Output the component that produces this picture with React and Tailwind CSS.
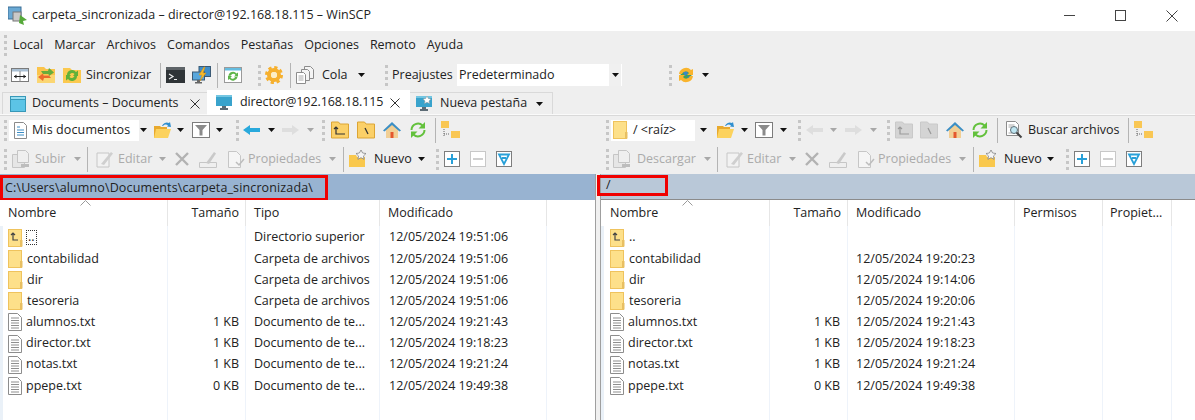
import React from 'react';

const font = { fontFamily: '"Open Sans", "Noto Sans", sans-serif' };

const Caret = ({ dim, className = '' }) => (
  <svg width="7" height="4" viewBox="0 0 7 4" className={`shrink-0 ${className}`}>
    <path d="M0 0h7L3.500 4z" fill={dim ? '#a8a8a8' : '#111'} />
  </svg>
);

const Grip = ({ className = '' }) => (
  <div className={`shrink-0 w-[3px] h-[21px] border-l-[3px] border-dotted border-[#c6c6c6] ${className}`} />
);

const Sep = ({ className = '' }) => <div className={`shrink-0 w-px h-[25px] bg-[#b4b4b4] ${className}`} />;

const Svg = ({ w = 18, h = 18, children, className = '' }) => (
  <svg width={w} height={h} viewBox="0 0 18 18" className={`shrink-0 ${className}`}>{children}</svg>
);

const FolderIcon = ({ up, w = 15, h = 18 }) => (
  <svg width={w} height={h} viewBox="0 0 15 18" className="shrink-0">
    <rect x="0.500" y="0.500" width="13" height="17" fill="#fde08a" stroke="#efc35d" />
    <rect x="12" y="11" width="2.500" height="6.500" fill="#e8bf62" />
    {up && <path d="M3 6l2-2 2 2M5 4v7h5" fill="none" stroke="#444" strokeWidth="1.200" />}
  </svg>
);

const TxtIcon = () => (
  <svg width="14" height="18" viewBox="0 0 14 18" className="shrink-0">
    <path d="M.5.5h9l4 4v13H.5z" fill="#fff" stroke="#8d8d8d" />
    <path d="M3 5h8M3 7.500h8M3 10h8M3 12.500h8M3 15h8" stroke="#8f8f8f" />
  </svg>
);

const Sync = () => (
  <Svg>
    <path d="M0 2h7l2 2h9v13H0z" fill="#fbc94f" />
    <path d="M4 9a5 5 0 0 1 9-3l2-1.500V10h-5l1.500-2a3 3 0 0 0-5 1z" fill="#5fb13a" />
    <path d="M14 10a5 5 0 0 1-9 3l-2 1.500V9h5l-1.500 2a3 3 0 0 0 5-1z" fill="#5fb13a" />
  </Svg>
);

const OrangeSync = () => (
  <Svg>
    <path d="M0 1h7l2 2h9v6H0z" fill="#fbc44b" />
    <path d="M0 9h18v8H0z" fill="#fbd672" />
    <path d="M4 5h7l1-3 5 4.500L12 10l-.500-2H6z" fill="#66ad3c" />
    <path d="M14 12H7l-1 3-5-4 5-3.500.5 2H12z" fill="#ea6b2d" />
  </Svg>
);

const Compare = () => (
  <Svg>
    <rect x=".5" y="2.500" width="17" height="13" fill="#fff" stroke="#7b7b7b" />
    <path d="M1 3h16v2.500H1z" fill="#a9bfd3" />
    <path d="M9 5v10.500" stroke="#888" />
    <path d="M3 10.500h12" stroke="#222" />
    <path d="M5.500 8.500l-2.500 2 2.500 2zM12.500 8.500l2.500 2-2.500 2z" fill="#222" />
  </Svg>
);

const Terminal = () => (
  <svg width="19" height="18" viewBox="0 0 19 18" className="shrink-0">
    <rect x="0" y="1" width="19" height="16" fill="#2f3437" />
    <rect x="0" y="1" width="19" height="3" fill="#5d6367" />
    <path d="M3 8l4 2.500L3 13" fill="none" stroke="#eee" strokeWidth="1.200" />
    <path d="M8 13.500h3" stroke="#eee" />
  </svg>
);

const Putty = () => (
  <svg width="19" height="18" viewBox="0 0 19 18" className="shrink-0">
    <rect x="7" y=".5" width="11.500" height="10" fill="#3f8ec9" stroke="#3a5a75" />
    <rect x=".5" y="6" width="12" height="8" fill="#58a7dc" stroke="#3a5a75" />
    <path d="M5 14h3v2h2v1.500H3V16h2z" fill="#666" />
    <path d="M12 1L7 9h3l-2 6 6-8h-3l2-6z" fill="#f7b92a" stroke="#d9920f" strokeWidth=".5" />
  </svg>
);

const RefreshBox = () => (
  <Svg>
    <rect x=".5" y="1.500" width="17" height="15" fill="#fff" stroke="#9a9a9a" />
    <path d="M1 2h16v2.500H1z" fill="#65bde0" />
    <path d="M4.500 10a4.500 4.500 0 0 1 8-2.500L14 6.500v4h-4l1.500-1.500a2.500 2.500 0 0 0-4.500.5z" fill="#5db54a" />
    <path d="M13.500 11a4.500 4.500 0 0 1-8 2L4 14v-4h4l-1.500 1.500a2.500 2.500 0 0 0 4.500-.5z" fill="#5db54a" />
  </Svg>
);

const Gear = () => (
  <Svg>
    <circle cx="9" cy="9" r="5" fill="none" stroke="#f6b02e" strokeWidth="4" />
    <circle cx="9" cy="9" r="7.500" fill="none" stroke="#f6b02e" strokeWidth="3" strokeDasharray="3.200 2.690" />
    <circle cx="9" cy="9" r="3" fill="#fdeec4" />
  </Svg>
);

const Copies = () => (
  <Svg>
    <path d="M8.500.5h6l3 3v9h-9z" fill="#f4f4f4" stroke="#8c8c8c" />
    <path d="M5.500 3.500h6l2 2v9h-8z" fill="#f4f4f4" stroke="#8c8c8c" />
    <path d="M.5 6.500h7l2 2v9h-9z" fill="#fff" stroke="#8c8c8c" />
    <path d="M2.500 10h5M2.500 12h5M2.500 14h5" stroke="#aaa" />
  </Svg>
);

const Globe = () => (
  <Svg>
    <circle cx="9" cy="9" r="5.500" fill="#3fa15b" />
    <path d="M6 6l4-1 1 3-3 2zM10 11l3-1-1 3z" fill="#3a86c8" />
    <path d="M2 8a7 7 0 0 1 12-4l2-1v6h-6l2-2a4 4 0 0 0-7 1z" fill="#f9b42d" />
    <path d="M16 10a7 7 0 0 1-12 4l-2 1V9h6l-2 2a4 4 0 0 0 7-1z" fill="#f9b42d" />
  </Svg>
);

const Monitor = ({ star }) => (
  <svg width="16" height="16" viewBox="0 0 16 16" className="shrink-0">
    <rect x="0" y="0" width="16" height="11" fill="#39a3cc" />
    <path d="M0 0h16v2H0z" fill="#74c6e2" />
    <path d="M6 11h4v2h2v2H4v-2h2z" fill="#5c6b75" />
    {star && <path d="M11 0l1.300 2.500L15 3l-2 2 .5 2.500-2.500-1.200-2.500 1.200L9 5 7 3l2.700-.5z" fill="#fff" stroke="#999" strokeWidth=".5" />}
  </svg>
);

const WinFolder = () => (
  <svg width="16" height="16" viewBox="0 0 16 16" className="shrink-0">
    <rect x=".5" y=".5" width="15" height="15" fill="#5cc4e6" stroke="#3798b8" />
    <rect x=".5" y=".5" width="15" height="3" fill="#9bdff2" stroke="#3798b8" />
  </svg>
);

const OpenFolder = () => (
  <svg width="19" height="18" viewBox="0 0 19 18" className="shrink-0">
    <path d="M1 5h6l1 1h6v11H1z" fill="#e8a92d" />
    <path d="M3 8h15l-3 9H1z" fill="#fcd25d" />
    <path d="M9 5a5 5 0 0 1 7-3l1-1 1 5-4-.5 1-1a3 3 0 0 0-5 .5z" fill="#2f8fd0" />
  </svg>
);

const Filter = () => (
  <Svg>
    <rect x=".5" y="1.500" width="17" height="15" fill="#fff" stroke="#7c7c7c" />
    <path d="M3 4h12l-4.500 5v5.500h-3V9z" fill="#8a8a8a" />
  </Svg>
);

const Arrow = ({ dir = 'left', dim }) => (
  <svg width="17" height="10" viewBox="0 0 17 10" className="shrink-0">
    <path d={dir === 'left' ? 'M0 5l7-5v3h10v4H7v3z' : 'M17 5l-7-5v3H0v4h10v3z'} fill={dim ? '#dedede' : '#29a9dc'} />
  </svg>
);

const ParentDir = ({ dim }) => (
  <Svg>
    <path d="M.5 1h7l1.500 2h8.500v14H.5z" fill={dim ? '#d4d4d4' : '#fbd068'} stroke={dim ? '#c9c9c9' : '#dca534'} />
    <path d="M3 8l2-2 2 2M5 6v7h9" fill="none" stroke={dim ? '#9a9a9a' : '#333'} strokeWidth="1.200" />
  </Svg>
);

const RootDir = ({ dim }) => (
  <Svg>
    <path d="M.5 1h7l1.500 2h8.500v14H.5z" fill={dim ? '#d4d4d4' : '#fbd068'} stroke={dim ? '#c9c9c9' : '#dca534'} />
    <path d="M8 7l3 6" stroke={dim ? '#9a9a9a' : '#333'} strokeWidth="1.300" />
  </Svg>
);

const Home = () => (
  <Svg>
    <path d="M3 8l6-5 6 5v9H3z" fill="#f1cf95" />
    <path d="M7.500 11h3v6h-3z" fill="#e4572e" />
    <path d="M0 9.500L9 1l9 8.500-1.500 1L9 4 1.500 10.500z" fill="#3c8fc5" />
  </Svg>
);

const GreenRefresh = () => (
  <Svg>
    <path d="M2.500 9a6.500 6.500 0 0 1 11-4.500" fill="none" stroke="#63c13c" strokeWidth="2" />
    <path d="M15.500 9a6.500 6.500 0 0 1-11 4.500" fill="none" stroke="#63c13c" strokeWidth="2" />
    <path d="M16 1v6.500H9.500z" fill="#63c13c" />
    <path d="M2 17v-6.500h6.500z" fill="#63c13c" />
  </Svg>
);

const Tree = () => (
  <svg width="20" height="18" viewBox="0 0 20 18" className="shrink-0">
    <path d="M0 0h8v7H0zM10 10h9v7h-9z" fill="#f9c754" />
    <path d="M3 8v7M3 13h6" stroke="#666" strokeDasharray="1 1" />
  </svg>
);

const Transfer = () => (
  <Svg>
    <path d="M.5 4.500h9l3 3v10H.5z" fill="#e6e6e6" stroke="#c5c5c5" />
    <path d="M5.500.5h8l3 3v9h-11z" fill="#efefef" stroke="#c5c5c5" />
    <path d="M9 14h8v3H9z" fill="#bdbdbd" />
  </Svg>
);

const EditIcon = () => (
  <Svg>
    <path d="M1 3h12v14H1z" fill="#f2f2f2" stroke="#c6c6c6" />
    <path d="M5 14L15 2l2 1.500L8 15z" fill="#cfcfcf" />
  </Svg>
);

const Cross = () => (
  <svg width="14" height="14" viewBox="0 0 14 14" className="shrink-0">
    <path d="M1 1l12 12M13 1L1 13" stroke="#b2b2b2" strokeWidth="2.400" />
  </svg>
);

const Rename = () => (
  <Svg>
    <path d="M.5 12.500h17v5H.5z" fill="none" stroke="#c6c6c6" />
    <path d="M7 13L15 2l2 1.500L10 14z" fill="#c9c9c9" />
  </Svg>
);

const Props = () => (
  <Svg>
    <path d="M1.500 1.500h8l4 4v12h-12z" fill="#f5f5f5" stroke="#c6c6c6" />
    <path d="M9 12l3 3 5-6" fill="none" stroke="#bdbdbd" strokeWidth="1.500" />
  </Svg>
);

const NewFolder = () => (
  <Svg>
    <path d="M0 5h7l1 2h8v10H0z" fill="#f9c84d" />
    <path d="M12 0l1.600 3 3.400.5-2.500 2.400.6 3.400-3.100-1.600-3.100 1.600.6-3.400L7 3.500 10.400 3z" fill="#f5f5f5" stroke="#777" strokeWidth=".7" />
  </Svg>
);

const BoxBtn = ({ kind }) => {
  const dim = kind === 'minus';
  return (
    <svg width="16" height="16" viewBox="0 0 16 16" className="shrink-0">
      <rect x=".5" y=".5" width="15" height="15" fill="#fff" stroke={dim ? '#c8c8c8' : '#7d7d7d'} />
      {kind === 'plus' && <path d="M3 8h10M8 3v10" stroke="#28a0d8" strokeWidth="2" />}
      {kind === 'minus' && <path d="M3 8h10" stroke="#cfcfcf" strokeWidth="2" />}
      {kind === 'check' && <path d="M3 3.500h10L8 13zM6 7h4" fill="none" stroke="#28a0d8" strokeWidth="1.800" />}
    </svg>
  );
};

const Search = () => (
  <svg width="17" height="18" viewBox="0 0 17 18" className="shrink-0">
    <path d="M.5.5h9l3 3v11H.5z" fill="#fff" stroke="#8c8c8c" />
    <path d="M2.500 4h6M2.500 6h4M2.500 12h4" stroke="#aaa" />
    <circle cx="8" cy="9" r="3.500" fill="#bfe6f2" stroke="#5d6d75" />
    <path d="M10.500 11.500l5 5" stroke="#444" strokeWidth="2" />
  </svg>
);

const Label = ({ w, dim, children, className = '' }) => (
  <span className={`shrink-0 whitespace-nowrap ${dim ? 'text-[#ababab]' : 'text-[#222]'} ${className}`} style={{ width: w }}>
    {children}
  </span>
);

const Th = ({ w, right, pl = '', children }) => (
  <div className={`shrink-0 h-full flex items-center border-r border-[#e6e6e6] ${right ? 'justify-end pr-[6px]' : ''} ${pl}`} style={{ width: w }}>
    {children}
  </div>
);

const Cell = ({ children, className = '' }) => (
  <div className={`h-[21.2px] flex items-center whitespace-nowrap ${className}`}>{children}</div>
);

const files = [
  ['up', '..'],
  ['dir', 'contabilidad'],
  ['dir', 'dir'],
  ['dir', 'tesoreria'],
  ['txt', 'alumnos.txt'],
  ['txt', 'director.txt'],
  ['txt', 'notas.txt'],
  ['txt', 'ppepe.txt'],
];

const sizes = ['', '', '', '', '1 KB', '1 KB', '1 KB', '0 KB'];

const leftTypes = [
  'Directorio superior',
  'Carpeta de archivos',
  'Carpeta de archivos',
  'Carpeta de archivos',
  'Documento de te...',
  'Documento de te...',
  'Documento de te...',
  'Documento de te...',
];

const leftDates = [
  '12/05/2024 19:51:06',
  '12/05/2024 19:51:06',
  '12/05/2024 19:51:06',
  '12/05/2024 19:51:06',
  '12/05/2024 19:21:43',
  '12/05/2024 19:18:23',
  '12/05/2024 19:21:24',
  '12/05/2024 19:49:38',
];

const rightDates = [
  '',
  '12/05/2024 19:20:23',
  '12/05/2024 19:14:06',
  '12/05/2024 19:20:06',
  '12/05/2024 19:21:43',
  '12/05/2024 19:18:23',
  '12/05/2024 19:21:24',
  '12/05/2024 19:49:38',
];

const FileIcon = ({ kind }) => {
  if (kind === 'txt') return <TxtIcon />;
  return <FolderIcon up={kind === 'up'} />;
};

const SortMark = ({ className = '' }) => (
  <svg width="11" height="6" viewBox="0 0 11 6" className={`absolute top-0 ${className}`}>
    <path d="M.5 5.500l5-5 5 5" fill="none" stroke="#9a9a9a" />
  </svg>
);

const cols = 'shrink-0 h-full border-r border-[#eef3fa]';

export default function App() {
  return (
    <div className="w-[1195px] h-[420px] overflow-hidden bg-white text-[12.5px] text-[#222] leading-none" style={font}>
      {/* title bar */}
      <div className="h-[31px] flex items-center pl-[8px] pr-[17px] bg-white">
        <svg width="19" height="20" viewBox="0 0 19 20" className="shrink-0">
          <rect x="0" y="1" width="13" height="12" fill="#6aa9d4" stroke="#3a6f96" />
          <rect x="5" y="6" width="8" height="9" fill="#c9c9c9" stroke="#777" />
          <path d="M12 9l7 5-4 1 1 4-5-2z" fill="#56a93a" />
        </svg>
        <span className="ml-[5px] whitespace-nowrap">carpeta_sincronizada – director@192.168.18.115 – WinSCP</span>
        <div className="ml-auto flex items-center gap-[40px]">
          <div className="w-[11px] h-px bg-[#444]" />
          <div className="w-[11px] h-[11px] border border-[#444]" />
          <svg width="12" height="12" viewBox="0 0 12 12"><path d="M.5.5l11 11M11.500.5l-11 11" stroke="#444" /></svg>
        </div>
      </div>

      <div className="bg-[#efefef]">
        {/* menu */}
        <div className="h-[29px] flex items-center pl-[4px]">
          <Grip />
          <div className="ml-[6px] flex gap-[11px]">
            {['Local', 'Marcar', 'Archivos', 'Comandos', 'Pestañas', 'Opciones', 'Remoto', 'Ayuda'].map(m => (
              <span key={m}>{m}</span>
            ))}
          </div>
        </div>

        {/* main toolbar */}
        <div className="h-[30px] flex items-center pl-[4px]">
          <Grip />
          <div className="ml-[4px]"><Compare /></div>
          <div className="ml-[8px]"><OrangeSync /></div>
          <div className="ml-[8px]"><Sync /></div>
          <Label w={68} className="ml-[5px]">Sincronizar</Label>
          <Sep className="ml-[6px]" />
          <div className="ml-[5px]"><Terminal /></div>
          <div className="ml-[7px]"><Putty /></div>
          <Sep className="ml-[6px]" />
          <div className="ml-[6px]"><RefreshBox /></div>
          <Grip className="ml-[16px]" />
          <div className="ml-[4px]"><Gear /></div>
          <Sep className="ml-[7px]" />
          <div className="ml-[5px]"><Copies /></div>
          <Label w={28} className="ml-[8px]">Cola</Label>
          <Caret className="ml-[8px]" />
          <Grip className="ml-[20px]" />
          <Label w={62} className="ml-[4px]">Preajustes</Label>
          <div className="ml-[3px] w-[165px] h-[22px] bg-white flex items-center justify-between pl-[2px]">
            <span>Predeterminado</span>
            <div className="w-[13px] h-full bg-[#f0f0f0] flex items-center justify-center border-r border-white"><Caret /></div>
          </div>
          <Grip className="ml-[47px]" />
          <div className="ml-[5px]"><Globe /></div>
          <Caret className="ml-[7px]" />
        </div>

        {/* tabs */}
        <div className="h-[24px] flex items-end pl-[2px]">
          <div className="w-[205px] h-[22px] flex items-center pl-[7px] border border-b-0 border-[#d9d9d9] border-r-0">
            <WinFolder />
            <span className="ml-[6px] whitespace-nowrap">Documents – Documents</span>
            <svg width="10" height="10" viewBox="0 0 10 10" className="ml-auto mr-[7px]"><path d="M.5.5l9 9M9.500.5l-9 9" stroke="#333" /></svg>
          </div>
          <div className="w-[203px] h-[25px] bg-white flex items-center pl-[9px] mb-[-1px]">
            <Monitor />
            <span className="ml-[8px] whitespace-nowrap tracking-[-0.1px]">director@192.168.18.115</span>
            <svg width="10" height="10" viewBox="0 0 10 10" className="ml-auto mr-[10px]"><path d="M.5.5l9 9M9.500.5l-9 9" stroke="#333" /></svg>
          </div>
          <div className="w-[143px] h-[22px] flex items-center pl-[6px] border border-b-0 border-[#d9d9d9] border-l-0">
            <Monitor star />
            <span className="ml-[8px] whitespace-nowrap">Nueva pestaña</span>
            <Caret className="ml-[9px]" />
          </div>
        </div>
        <div className="h-[2px] bg-[#fafafa] border-b border-[#d9d9d9]" />

        {/* panel toolbars, row 1 */}
        <div className="h-[28px] flex items-center">
          <div className="w-[601px] shrink-0 flex items-center pl-[4px]">
            <Grip />
            <div className="ml-[2px] w-[130px] h-[21px] bg-white flex items-center pl-[5px]">
              <svg width="13" height="17" viewBox="0 0 13 17" className="shrink-0">
                <path d="M.5.5h9l3 3v13H.5z" fill="#fff" stroke="#8a8a8a" />
                <path d="M3 5h3M3 8h7M3 10.500h7M3 13h7" stroke="#3b8cc4" />
              </svg>
              <span className="ml-[5px] whitespace-nowrap tracking-[0.12px]">Mis documentos</span>
            </div>
            <div className="w-[9px] flex justify-center"><Caret /></div>
            <div className="ml-[5px]"><OpenFolder /></div>
            <Caret className="ml-[5px]" />
            <div className="ml-[8px]"><Filter /></div>
            <Caret className="ml-[6px]" />
            <Grip className="ml-[13px]" />
            <div className="ml-[4px]"><Arrow /></div>
            <Caret className="ml-[8px]" />
            <div className="ml-[7px]"><Arrow dir="right" dim /></div>
            <Caret dim className="ml-[8px]" />
            <Grip className="ml-[8px]" />
            <div className="ml-[6px]"><ParentDir /></div>
            <div className="ml-[8px]"><RootDir /></div>
            <div className="ml-[8px]"><Home /></div>
            <div className="ml-[8px]"><GreenRefresh /></div>
            <Sep className="ml-[8px]" />
            <div className="ml-[5px]"><Tree /></div>
          </div>
          <div className="flex items-center pl-[5px]">
            <Grip />
            <div className="ml-[2px] w-[84px] h-[21px] bg-white flex items-center pl-[2px]">
              <FolderIcon />
              <span className="ml-[5px] whitespace-nowrap">/ &lt;raíz&gt;</span>
            </div>
            <div className="w-[16px] flex justify-center"><Caret /></div>
            <div className="ml-[5px]"><OpenFolder /></div>
            <Caret className="ml-[6px]" />
            <div className="ml-[7px]"><Filter /></div>
            <Caret className="ml-[7px]" />
            <Grip className="ml-[11px]" />
            <div className="ml-[5px]"><Arrow dim /></div>
            <Caret dim className="ml-[7px]" />
            <div className="ml-[8px]"><Arrow dir="right" dim /></div>
            <Caret dim className="ml-[8px]" />
            <Grip className="ml-[10px]" />
            <div className="ml-[5px]"><ParentDir dim /></div>
            <div className="ml-[7px]"><RootDir dim /></div>
            <div className="ml-[8px]"><Home /></div>
            <div className="ml-[7px]"><GreenRefresh /></div>
            <Sep className="ml-[8px]" />
            <div className="ml-[8px]"><Search /></div>
            <Label w={92} className="ml-[5px]">Buscar archivos</Label>
            <Sep className="ml-[8px]" />
            <div className="ml-[5px]"><Tree /></div>
          </div>
        </div>

        {/* panel toolbars, row 2 */}
        <div className="h-[30px] flex items-center">
          <div className="w-[601px] shrink-0 flex items-center pl-[4px]">
            <Grip />
            <div className="ml-[5px]"><Transfer /></div>
            <Label dim w={36} className="ml-[5px]">Subir</Label>
            <Caret dim className="ml-[3px]" />
            <Sep className="ml-[6px]" />
            <div className="ml-[8px]"><EditIcon /></div>
            <Label dim w={38} className="ml-[4px]">Editar</Label>
            <Caret dim className="ml-[3px]" />
            <div className="ml-[9px]"><Cross /></div>
            <div className="ml-[10px]"><Rename /></div>
            <div className="ml-[10px]"><Props /></div>
            <Label dim w={77} className="ml-[3px]">Propiedades</Label>
            <Caret dim className="ml-[4px]" />
            <Sep className="ml-[7px]" />
            <div className="ml-[5px]"><NewFolder /></div>
            <Label w={42} className="ml-[7px]">Nuevo</Label>
            <Caret className="ml-[2px]" />
            <Grip className="ml-[11px]" />
            <div className="ml-[5px]"><BoxBtn kind="plus" /></div>
            <div className="ml-[10px]"><BoxBtn kind="minus" /></div>
            <div className="ml-[10px]"><BoxBtn kind="check" /></div>
          </div>
          <div className="flex items-center pl-[5px]">
            <Grip />
            <div className="ml-[4px]"><Transfer /></div>
            <Label dim w={63} className="ml-[6px]">Descargar</Label>
            <Caret dim className="ml-[4px]" />
            <Sep className="ml-[6px]" />
            <div className="ml-[8px]"><EditIcon /></div>
            <Label dim w={38} className="ml-[3px]">Editar</Label>
            <Caret dim className="ml-[4px]" />
            <div className="ml-[9px]"><Cross /></div>
            <div className="ml-[10px]"><Rename /></div>
            <div className="ml-[10px]"><Props /></div>
            <Label dim w={77} className="ml-[3px]">Propiedades</Label>
            <Caret dim className="ml-[4px]" />
            <Sep className="ml-[7px]" />
            <div className="ml-[5px]"><NewFolder /></div>
            <Label w={42} className="ml-[7px]">Nuevo</Label>
            <Caret className="ml-[1px]" />
            <Grip className="ml-[12px]" />
            <div className="ml-[5px]"><BoxBtn kind="plus" /></div>
            <div className="ml-[10px]"><BoxBtn kind="minus" /></div>
            <div className="ml-[10px]"><BoxBtn kind="check" /></div>
          </div>
        </div>
      </div>

      {/* panels */}
      <div className="flex h-[247px]">
        {/* left panel */}
        <div className="w-[595px] shrink-0 flex flex-col">
          <div className="h-[26px] shrink-0 bg-[#98b3d1] pt-[1px]">
            <div className="w-[328px] h-[26px] border-[3px] border-[#f00000] flex items-center pl-[2px] whitespace-nowrap tracking-[0.13px]">
              C:\Users\alumno\Documents\carpeta_sincronizada\
            </div>
          </div>
          <div className="relative h-[26px] shrink-0 flex items-center pl-[8px] bg-white">
            <SortMark className="left-[80px]" />
            <div className="w-[160px] h-full flex items-center border-r border-[#e6e6e6]">Nombre</div>
            <Th w={78} right>Tamaño</Th>
            <Th w={134} pl="pl-[8px]">Tipo</Th>
            <Th w={167} pl="pl-[8px]">Modificado</Th>
          </div>
          <div className="flex-1 flex border-l-[3px] border-[#eaf1f8] pl-[5px] min-h-0">
            <div className={`${cols} w-[160px] pt-[1px]`}>
              {files.map(([kind, name], i) => (
                <Cell key={name}>
                  <FileIcon kind={kind} />
                  <span className={`ml-[4px] ${i === 0 ? 'outline outline-1 outline-dotted outline-[#333] px-[1px]' : ''}`}>{name}</span>
                </Cell>
              ))}
            </div>
            <div className={`${cols} w-[78px] pt-[1px] pr-[6px]`}>
              {sizes.map((s, i) => <Cell key={i} className="justify-end">{s}</Cell>)}
            </div>
            <div className={`${cols} w-[134px] pt-[1px] pl-[8px]`}>
              {leftTypes.map((t, i) => <Cell key={i}>{t}</Cell>)}
            </div>
            <div className={`${cols} w-[167px] pt-[1px] pl-[9px]`}>
              {leftDates.map((d, i) => <Cell key={i}>{d}</Cell>)}
            </div>
          </div>
        </div>

        {/* splitter */}
        <div className="w-[6px] shrink-0 bg-[#f0f0f0] border-x border-[#9f9f9f]" />

        {/* right panel */}
        <div className="flex-1 flex flex-col">
          <div className="h-[26px] shrink-0 bg-[#b9c8d8] border-b border-[#8b8b8b]">
            <div className="ml-[-4px] mt-[1px] w-[71px] h-[21px] border-[3px] border-[#f00000] flex items-center pl-[6px]">/</div>
          </div>
          <div className="relative h-[26px] shrink-0 flex items-center pl-[9px] bg-white">
            <SortMark className="left-[81px]" />
            <div className="w-[160px] h-full flex items-center border-r border-[#e6e6e6]">Nombre</div>
            <Th w={78} right>Tamaño</Th>
            <Th w={167} pl="pl-[8px]">Modificado</Th>
            <Th w={88} pl="pl-[8px]">Permisos</Th>
            <Th w={69} pl="pl-[7px]">Propiet...</Th>
          </div>
          <div className="flex-1 flex border-l-[3px] border-[#eaf1f8] pl-[6px] min-h-0">
            <div className={`${cols} w-[160px] pt-[1px]`}>
              {files.map(([kind, name]) => (
                <Cell key={name}>
                  <FileIcon kind={kind} />
                  <span className="ml-[4px]">{name}</span>
                </Cell>
              ))}
            </div>
            <div className={`${cols} w-[78px] pt-[1px] pr-[7px]`}>
              {sizes.map((s, i) => <Cell key={i} className="justify-end">{s}</Cell>)}
            </div>
            <div className={`${cols} w-[167px] pt-[1px] pl-[8px]`}>
              {rightDates.map((d, i) => <Cell key={i}>{d}</Cell>)}
            </div>
            <div className={`${cols} w-[88px]`} />
            <div className={`${cols} w-[69px]`} />
          </div>
        </div>
      </div>
    </div>
  );
}
